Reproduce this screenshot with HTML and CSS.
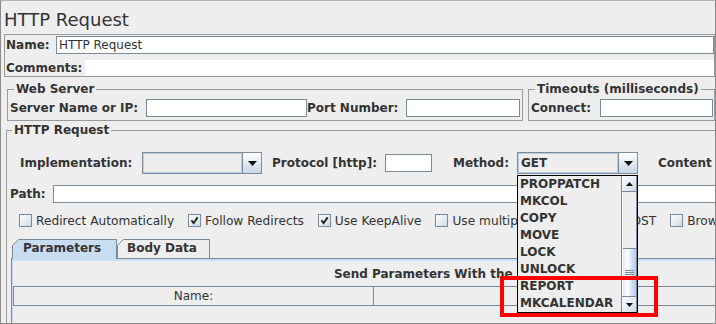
FILE: index.html
```html
<!DOCTYPE html>
<html>
<head>
<meta charset="utf-8">
<title>HTTP Request</title>
<link rel="stylesheet" href="styles.css">
</head>
<body>
<div class="win">
  <div class="title">HTTP Request</div>

  <div class="namebox">
    <div class="nrow">
      <span class="lbl l-name">Name:</span>
      <div class="tf grow">HTTP Request</div>
    </div>
    <div class="nrow crow">
      <span class="lbl l-comments">Comments:</span>
      <div class="ta grow"></div>
    </div>
  </div>

  <div class="servers">
    <fieldset class="fs web">
      <legend>Web Server</legend>
      <div class="frow">
        <span class="lbl l-server">Server Name or IP:</span>
        <div class="tf w-server"></div>
        <span class="lbl l-port">Port Number:</span>
        <div class="tf w-port"></div>
      </div>
    </fieldset>
    <fieldset class="fs timeouts">
      <legend>Timeouts (milliseconds)</legend>
      <div class="frow">
        <span class="lbl l-connect">Connect:</span>
        <div class="tf w-connect"></div>
      </div>
    </fieldset>
  </div>

  <fieldset class="fs http">
    <legend>HTTP Request</legend>

    <div class="irow">
      <span class="lbl l-impl">Implementation:</span>
      <div class="combo c-impl">
        <div class="combo-field"></div>
        <div class="combo-btn"><svg width="9" height="5" viewBox="0 0 9 5"><path d="M0 0H9L4.5 5Z" fill="#111"/></svg></div>
      </div>
      <span class="lbl l-proto">Protocol [http]:</span>
      <div class="tf w-proto"></div>
      <span class="lbl l-method">Method:</span>
      <div class="combo c-method">
        <div class="combo-field">GET</div>
        <div class="combo-btn"><svg width="9" height="5" viewBox="0 0 9 5"><path d="M0 0H9L4.5 5Z" fill="#111"/></svg></div>
      </div>
      <span class="lbl l-content">Content encoding:</span>
    </div>

    <div class="prow">
      <span class="lbl l-path">Path:</span>
      <div class="tf grow"></div>
    </div>

    <div class="cbrow">
      <div class="cb"><span class="box"></span><span>Redirect Automatically</span></div>
      <div class="cb"><span class="box"><svg width="11" height="11" viewBox="0 0 11 11"><path d="M2.5 5.2L4.6 8.2L8.6 2.4" fill="none" stroke="#222" stroke-width="1.9"/></svg></span><span>Follow Redirects</span></div>
      <div class="cb"><span class="box"><svg width="11" height="11" viewBox="0 0 11 11"><path d="M2.5 5.2L4.6 8.2L8.6 2.4" fill="none" stroke="#222" stroke-width="1.9"/></svg></span><span>Use KeepAlive</span></div>
      <div class="cb"><span class="box"></span><span>Use multipart/form-data for POST</span></div>
      <div class="cb"><span class="box"></span><span>Browser-compatible headers</span></div>
    </div>

    <div class="tabs">
      <div class="tab sel">
        <svg class="tabshape" width="105" height="20" viewBox="0 0 105 20"><path d="M0.5 20V6.5L6.5 0.5H104.5V20" fill="#c8ddf2" stroke="#7a8a99"/></svg>
        <span class="tabtext">Parameters</span>
      </div>
      <div class="tab">
        <svg class="tabshape" width="93" height="19" viewBox="0 0 93 19"><path d="M0.5 19V6.5L6.5 0.5H92.5V19" fill="#eeeeee" stroke="#7a8a99"/></svg>
        <span class="tabtext">Body Data</span>
      </div>
    </div>

    <div class="tabpanel">
      <div class="sendhead">Send Parameters With the Request:</div>
      <div class="thead">
        <div class="th th1">Name:</div>
        <div class="th th2">Value</div>
        <div class="th th3">URL Encode?</div>
      </div>
    </div>
  </fieldset>

  <div class="popup">
    <div class="list">
      <div class="item">PROPPATCH</div>
      <div class="item">MKCOL</div>
      <div class="item">COPY</div>
      <div class="item">MOVE</div>
      <div class="item">LOCK</div>
      <div class="item">UNLOCK</div>
      <div class="item">REPORT</div>
      <div class="item">MKCALENDAR</div>
    </div>
    <div class="sbar">
      <div class="sbtn"><svg width="7" height="4" viewBox="0 0 7 4"><path d="M0 4H7L3.5 0Z" fill="#111"/></svg></div>
      <div class="track">
        <div class="thumb">
          <svg width="9" height="5" viewBox="0 0 9 5"><path d="M0 0.5H9M0 2.5H9M0 4.5H9" stroke="#7a8a99" stroke-width="1"/></svg>
        </div>
      </div>
      <div class="sbtn"><svg width="7" height="4" viewBox="0 0 7 4"><path d="M0 0H7L3.5 4Z" fill="#111"/></svg></div>
    </div>
  </div>

  <div class="redbox"></div>
</div>
</body>
</html>
```

FILE: styles.css
```css
* { box-sizing: border-box; }

html, body {
  margin: 0;
  padding: 0;
  background: #eeeeee;
}

body {
  font-family: "DejaVu Sans", "Noto Sans", sans-serif;
  font-size: 12px;
  color: #333333;
}

.win {
  position: relative;
  width: 716px;
  height: 324px;
  overflow: hidden;
  background: #eeeeee;
  border: 1px solid #8c8c8c;
  border-top-color: #b4b4b4;
}

.title {
  height: 29px;
  margin-bottom: 4px;
  padding: 9px 0 0 3px;
  font-size: 18px;
  line-height: 20px;
  color: #333333;
  white-space: nowrap;
}

.lbl {
  flex: none;
  font-weight: bold;
  white-space: nowrap;
  line-height: 14px;
}

.grow { flex: 1; min-width: 0; }

.tf {
  flex: none;
  height: 18px;
  border: 1px solid #7a8a99;
  background: #ffffff;
  padding-left: 2px;
  line-height: 16px;
  white-space: nowrap;
  overflow: hidden;
}

.tf.grow { flex: 1; }

/* name / comments */
.namebox {
  margin-left: 3px;
  height: 43px;
  border: 1px solid #9a9a9a;
  padding: 1px 0 0 1px;
}

.nrow {
  display: flex;
  align-items: center;
  height: 18px;
}

.crow {
  height: 16px;
  margin-top: 6px;
}

.l-name { width: 50px; }
.l-comments { width: 79px; }

.ta {
  height: 16px;
  background: #ffffff;
}

/* fieldsets */
.fs {
  margin: 0;
  min-width: 0;
  border: 1px solid #9a9a9a;
  padding: 0 0 3px 2px;
}

.fs legend {
  margin-left: 4px;
  padding: 0 2px;
  font-weight: bold;
  font-size: 12px;
  line-height: 13px;
  white-space: nowrap;
}

.servers {
  display: flex;
  margin: 6px 0 0 6px;
}

.web {
  flex: none;
  width: 516px;
}

.timeouts {
  flex: 1;
  margin-left: 5px;
}

.frow {
  display: flex;
  align-items: center;
  height: 18px;
  margin-top: 3px;
}

.l-server { width: 136px; }
.w-server { width: 161px; }
.l-port { width: 99px; }
.w-port { width: 114px; }
.l-connect { width: 69px; }
.w-connect { width: 113px; }

/* HTTP request */
.http {
  margin: 3px 0 0 5px;
  width: 1000px;
  height: 260px;
  padding: 0;
}

.http legend { margin-left: 5px; }

.irow {
  display: flex;
  align-items: center;
  height: 22px;
  margin-top: 15px;
  padding-left: 13px;
}

.l-impl { width: 122px; }
.l-proto { width: 113px; margin-left: 10px; }
.w-proto { width: 47px; }
.l-method { width: 64px; margin-left: 21px; }
.l-content { margin-left: 20px; }

.combo {
  flex: none;
  display: flex;
  height: 22px;
  border: 1px solid #7a8a99;
  background: #eeeeee;
}

.c-impl { width: 120px; }
.c-method { width: 121px; }

.combo-field {
  flex: 1;
  border: 1px solid #b8cfe5;
  padding-left: 2px;
  font-weight: bold;
  line-height: 18px;
  background: #eeeeee;
}

.combo-btn {
  flex: none;
  width: 19px;
  display: flex;
  align-items: center;
  justify-content: center;
  border-left: 1px solid #7a8a99;
  background: linear-gradient(#ffffff, #dde7f1 60%, #c8d7e6);
}

.combo-btn svg { display: block; margin-top: 1px; }

.prow {
  display: flex;
  align-items: center;
  height: 18px;
  margin-top: 11px;
  padding-left: 3px;
}

.l-path { width: 43px; }

.cbrow {
  display: flex;
  align-items: center;
  height: 13px;
  margin-top: 11px;
  padding-left: 12px;
  white-space: nowrap;
  font-size: 12.2px;
}

.cb {
  display: flex;
  align-items: center;
  margin-right: 14px;
  line-height: 14px;
}

.box {
  flex: none;
  width: 13px;
  height: 13px;
  margin-right: 4px;
  border: 1px solid #7a8a99;
  background: linear-gradient(135deg, #ffffff, #dce6f0 70%, #cdd9e6);
  display: flex;
  align-items: center;
  justify-content: center;
}

.box svg { display: block; }

/* tabs */
.tabs {
  display: flex;
  align-items: flex-start;
  margin-top: 12px;
  margin-bottom: -1px;
  padding-left: 5px;
  position: relative;
  z-index: 1;
}

.tab {
  position: relative;
  height: 19px;
  font-weight: bold;
  line-height: 19px;
  padding: 0 11px;
  white-space: nowrap;
}

.tab.sel {
  width: 105px;
  height: 20px;
}

.tab:not(.sel) {
  width: 93px;
  padding-left: 10px;
}

.tabshape {
  position: absolute;
  left: 0;
  top: 0;
  display: block;
}

.tabtext { position: relative; }

.tabpanel {
  margin-left: 4px;
  width: 888px;
  height: 80px;
  border-top: 1px solid #7a8a99;
  border-left: 1px solid #7a8a99;
  box-shadow: inset 1px 2px 0 #c8ddf2;
}

.sendhead {
  padding-top: 8px;
  height: 22px;
  margin-bottom: 5px;
  line-height: 14px;
  font-weight: bold;
  text-align: center;
  white-space: nowrap;
}

.thead {
  display: flex;
  margin-left: 1px;
  height: 20px;
  border-top: 1px solid #7a8a99;
  border-bottom: 1px solid #7a8a99;
  border-left: 1px solid #7a8a99;
}

.th {
  flex: none;
  line-height: 18px;
  text-align: center;
  white-space: nowrap;
  overflow: hidden;
}

.th1 {
  width: 360px;
  border-right: 1px solid #7a8a99;
}

.th2 {
  width: 408px;
  border-right: 1px solid #7a8a99;
}

.th3 { flex: 1; }

/* dropdown popup */
.popup {
  position: absolute;
  left: 516px;
  top: 174px;
  width: 121px;
  height: 138px;
  border: 1px solid #000000;
  background: #eeeeee;
  display: flex;
  z-index: 5;
}

.list {
  width: 103px;
  flex: none;
}

.item {
  height: 17px;
  line-height: 17px;
  padding-left: 2px;
  font-weight: bold;
  white-space: nowrap;
}

.sbar {
  flex: none;
  width: 16px;
  display: flex;
  flex-direction: column;
  border-left: 1px solid #7a8a99;
  border-right: 1px solid #7a8a99;
  background: #eeeeee;
}

.sbtn {
  flex: none;
  height: 16px;
  display: flex;
  align-items: center;
  justify-content: center;
  border: 1px solid #7a8a99;
  border-left: none;
  border-right: none;
  background: linear-gradient(135deg, #ffffff, #dde7f1 65%, #cddae8);
}

.sbtn:first-child { border-top: none; }
.sbtn:last-child { border-bottom: none; }
.sbtn svg { display: block; }

.track {
  flex: 1;
  display: flex;
  flex-direction: column;
  border-left: 1px solid #ffffff;
}

.thumb {
  margin-top: auto;
  height: 48px;
  border-top: 1px solid #7a8a99;
  background: linear-gradient(90deg, #dfeaf6, #ffffff 35%, #c9dbf0 75%, #b7cce4);
  display: flex;
  align-items: center;
  justify-content: center;
}

.thumb svg { display: block; }

.redbox {
  position: absolute;
  left: 499px;
  top: 275px;
  width: 158px;
  height: 41px;
  border: 4px solid #ff0000;
  z-index: 10;
}
```
